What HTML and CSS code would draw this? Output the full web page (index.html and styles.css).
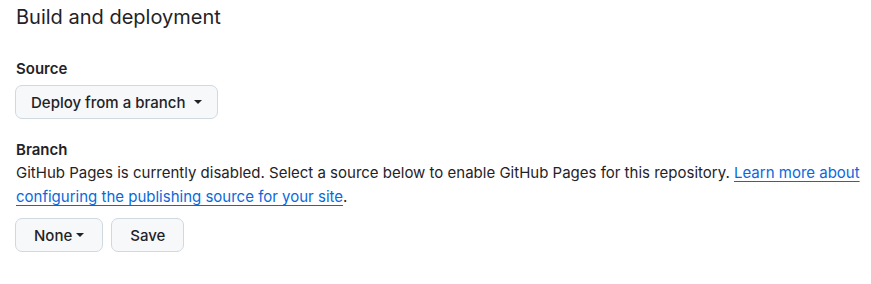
FILE: index.html
```html
<!DOCTYPE html>
<html lang="en">

<head>
    <meta charset="UTF-8">
    <meta name="viewport" content="width=device-width, initial-scale=1.0">
    <title>Pages</title>
    <link rel="stylesheet" href="styles.css">
</head>

<body>
    <div class="pages">
        <h2 class="subhead">Build and deployment</h2>
        <div class="field">
            <div class="label">Source</div>
            <button class="btn">Deploy from a branch <span class="caret"></span></button>
        </div>
        <div class="field">
            <div class="label">Branch</div>
            <p class="note">GitHub Pages is currently disabled. Select a source below to enable GitHub Pages for this repository. <a href="#">Learn more about configuring the publishing source for your site</a>.</p>
            <div class="actions">
                <button class="btn btn-small">None<span class="caret"></span></button>
                <button class="btn btn-small">Save</button>
            </div>
        </div>
    </div>
</body>

</html>
```

FILE: styles.css
```css
body {
    margin: 0;
    font-family: Inter, "Liberation Sans", sans-serif;
    font-size: 15px;
    color: #1f2328;
    background: #fff;
}

.pages {
    padding: 0 6px 0 15px;
}

.subhead {
    margin: 0 0 0 1px;
    padding-top: 2px;
    font-size: 20px;
    font-weight: 400;
    line-height: 30px;
}

.field {
    margin-top: 26px;
}

.field + .field {
    margin-top: 20px;
}

.label {
    margin: 0 0 5px 1px;
    font-weight: 600;
    line-height: 22px;
}

.field + .field .label {
    margin-bottom: 0;
}

.btn {
    display: inline-flex;
    align-items: center;
    height: 34px;
    padding: 0 15px;
    border: 1px solid #d1d9e0;
    border-radius: 7px;
    background: #f6f8fa;
    color: #1f2328;
    font-family: inherit;
    font-size: 15px;
    font-weight: 500;
}

.btn-small {
    padding: 0 18px;
}

.caret {
    display: inline-block;
    width: 0;
    height: 0;
    margin-left: 9px;
    border-top: 4px solid #1f2328;
    border-left: 4px solid transparent;
    border-right: 4px solid transparent;
}

.btn-small .caret {
    margin-left: 4px;
}

.note {
    margin: 0 0 0 1px;
    line-height: 24px;
}

.note a {
    color: #0969da;
    text-decoration: underline;
    text-underline-offset: 3px;
}

.actions {
    display: flex;
    gap: 8px;
    margin-top: 9px;
}
```
